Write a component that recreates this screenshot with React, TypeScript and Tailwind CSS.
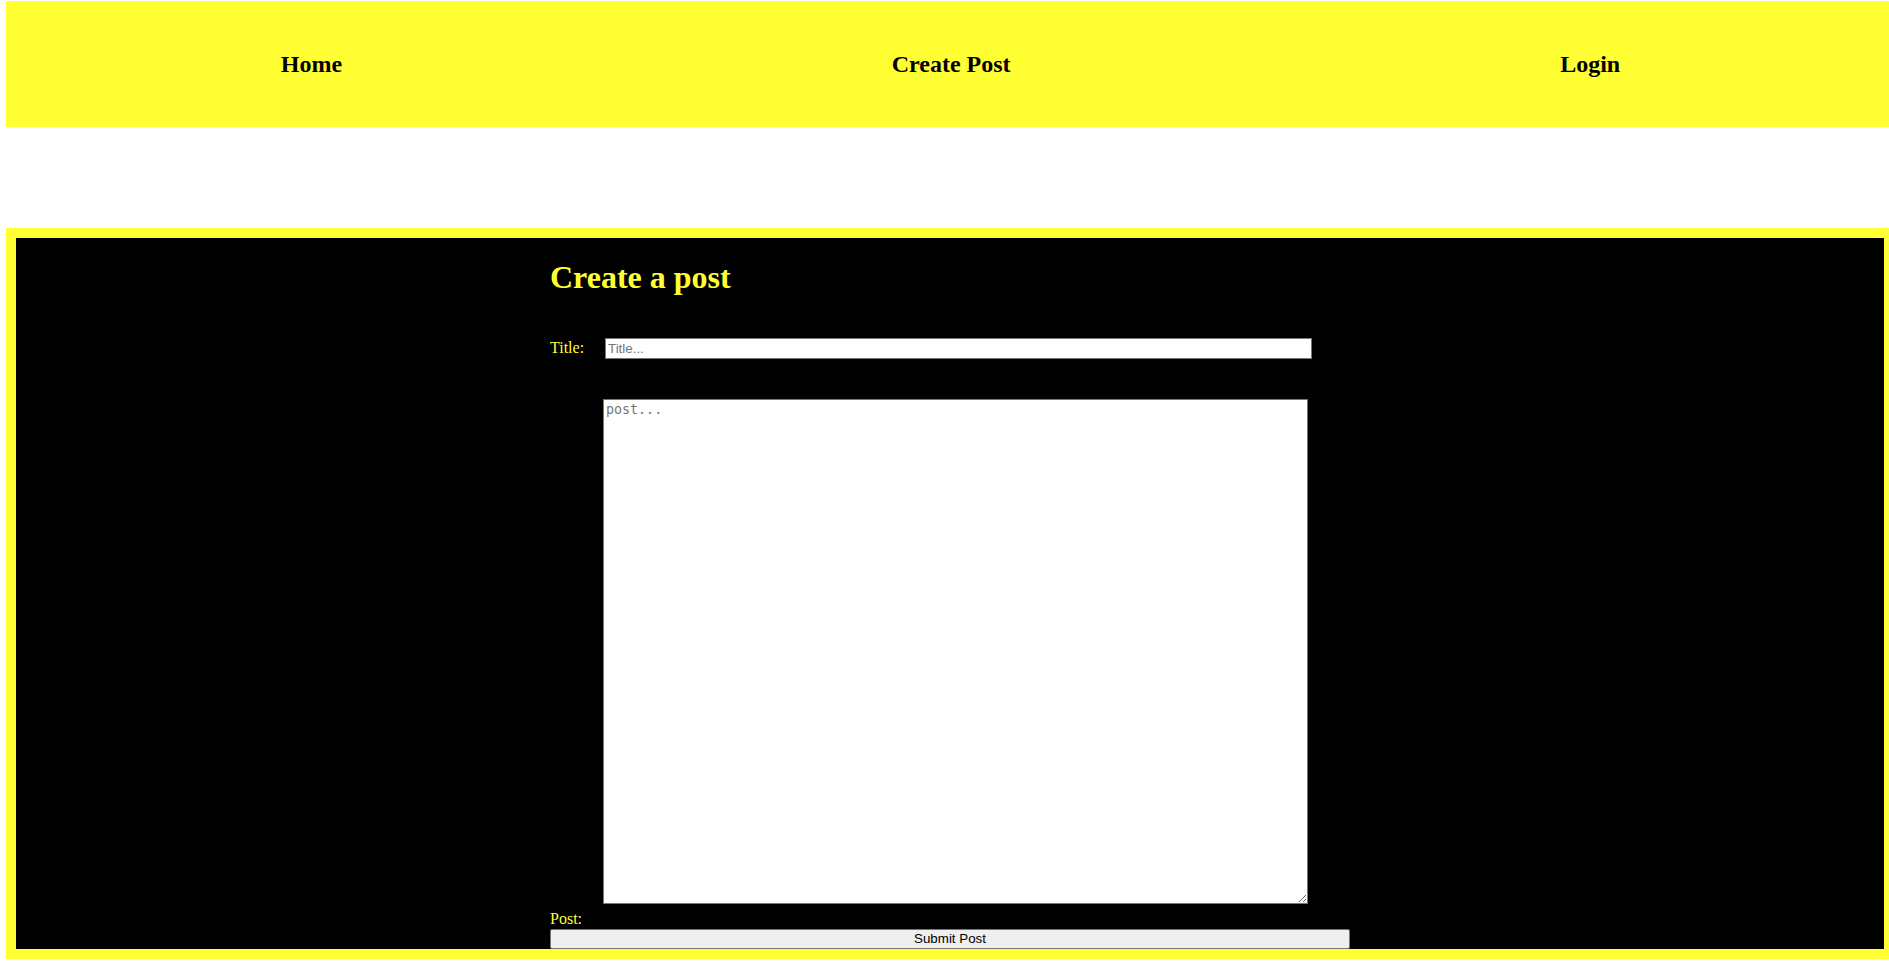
import { useState } from 'react';

const navItems = ['Home', 'Create Post', 'Login'];

const Navbar = () => {
  return (
    <nav className="w-[1889px] h-[126px] bg-[#ffff33] flex items-center justify-around">
      {navItems.map((label) => (
        <h2
          key={label}
          className="text-[24px] leading-[28px] font-bold text-black font-['Liberation_Serif',serif] cursor-pointer"
        >
          {label}
        </h2>
      ))}
    </nav>
  );
};

const CreatePost = () => {
  const [title, setTitle] = useState('');
  const [post, setPost] = useState('');

  return (
    <div className="mt-[101px] w-[1888px] border-[10px] border-[#ffff33] bg-black">
      <div className="w-[800px] mx-auto font-['Liberation_Serif',serif] text-[#ffff33]">
        <h1 className="mt-[21px] text-[32px] leading-[37px] font-bold">Create a post</h1>

        <div className="mt-[42px] flex items-start">
          <label className="w-[55px] text-[16px] leading-[18px] pt-px">Title:</label>
          <input
            value={title}
            onChange={(e) => setTitle(e.target.value)}
            placeholder="Title..."
            className="w-[707px] h-[21px] bg-white border border-[#767676] px-[2px] text-[13.33px] text-black font-['Liberation_Sans',Arial,sans-serif] placeholder:text-[#757575] outline-none"
          />
        </div>

        <textarea
          value={post}
          onChange={(e) => setPost(e.target.value)}
          placeholder="post..."
          className="block mt-[40px] ml-[53px] w-[705px] h-[505px] bg-white border border-[#767676] p-[2px] text-[13.33px] leading-[16px] text-black font-['DejaVu_Sans_Mono',monospace] placeholder:text-[#757575] outline-none"
        />

        <label className="block mt-[6px] text-[16px] leading-[18px] pb-px">Post:</label>
        <button className="block w-full h-[20px] bg-[#efefef] border border-[#767676] rounded-[2px] text-[13.33px] leading-[16px] text-black font-['Liberation_Sans',Arial,sans-serif]">
          Submit Post
        </button>
      </div>
    </div>
  );
};

export default function App() {
  return (
    <div className="w-full min-h-screen bg-white overflow-hidden pt-px pl-[6px]">
      <Navbar />
      <CreatePost />
    </div>
  );
}
